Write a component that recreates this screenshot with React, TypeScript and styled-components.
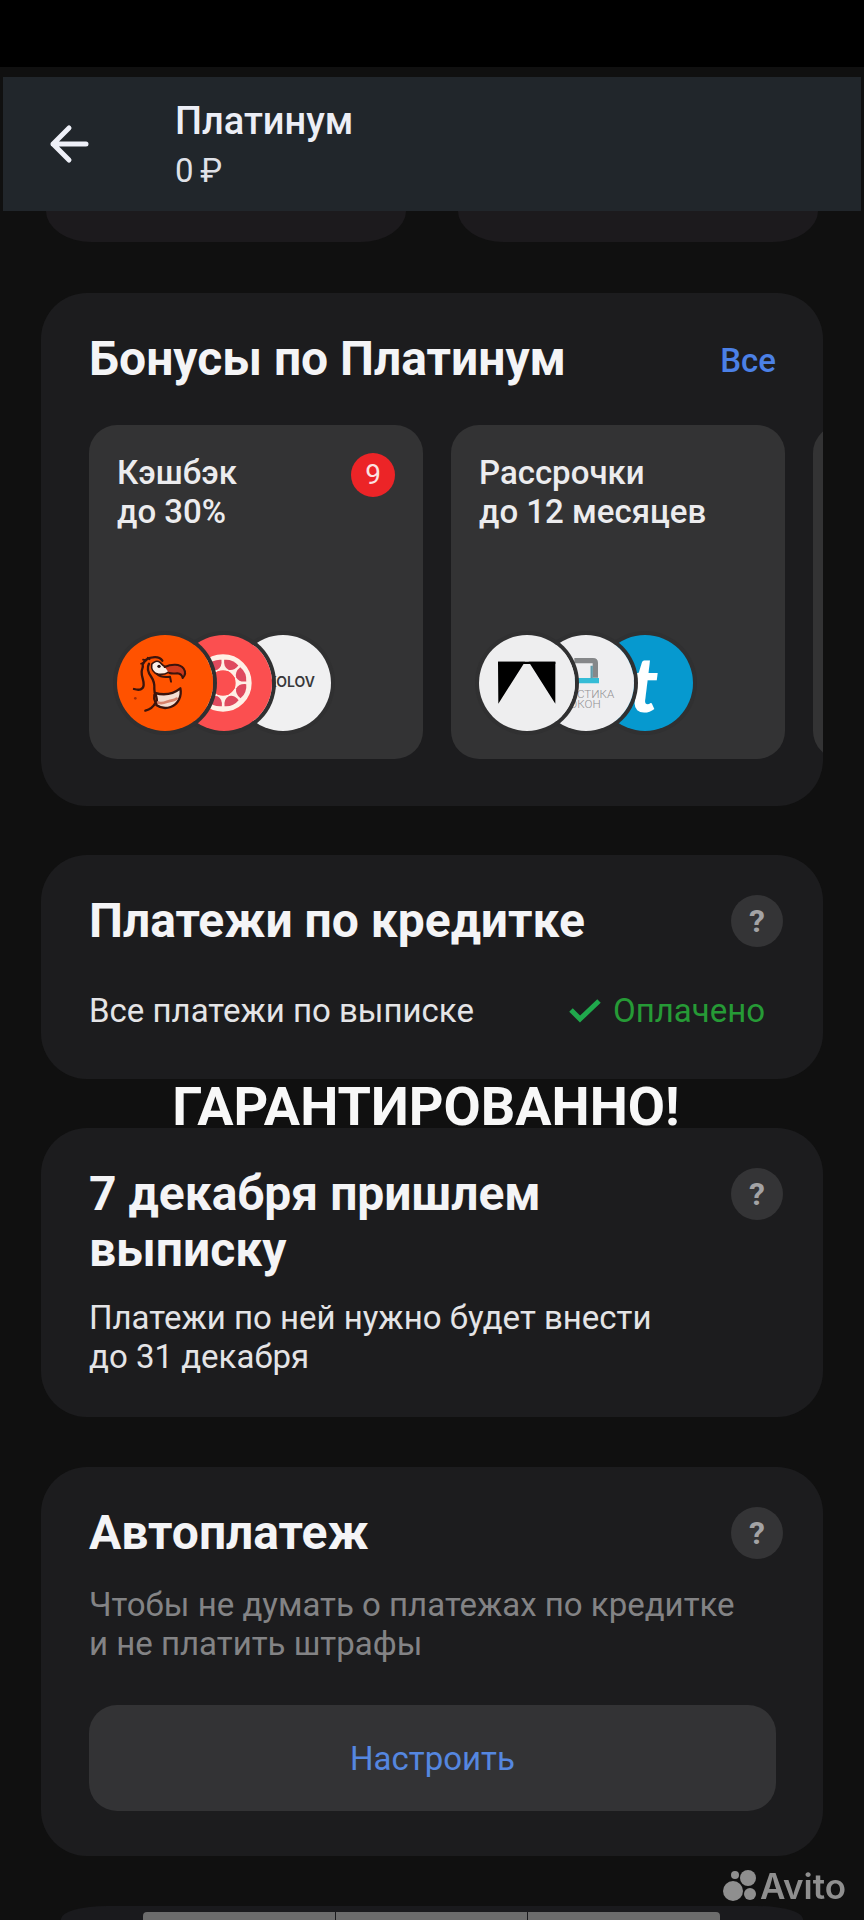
import React from "react";
import styled, { createGlobalStyle } from "styled-components";

const GlobalStyle = createGlobalStyle`
  * { box-sizing: border-box; }
  body {
    margin: 0;
    background: #101010;
    color: #f4f4f6;
    font-family: Roboto, "Liberation Sans", sans-serif;
  }
  h1, h2, p { margin: 0; }
  button { border: 0; padding: 0; font: inherit; cursor: pointer; }
`;

const Page = styled.div`
  display: flex;
  flex-direction: column;
  min-height: 100vh;
  overflow: hidden;
`;

const StatusBar = styled.div`
  height: 67px;
  background: #000;
`;

const Header = styled.header`
  display: flex;
  align-items: center;
  height: 134px;
  margin: 10px 3px 0;
  padding: 0 44px;
  gap: 82px;
  background: #21262b;
`;

const BackButton = styled.button`
  display: flex;
  background: none;
  color: #eef0f8;
`;

const HeaderText = styled.div`
  padding-top: 6px;
`;

const HeaderTitle = styled.h1`
  font-size: 38px;
  line-height: 48px;
  font-weight: 500;
  color: #eceef6;
`;

const Balance = styled.p`
  font-size: 33px;
  line-height: 52px;
  color: #dfe1e8;
`;

const StubRow = styled.div`
  display: flex;
  gap: 52px;
  padding: 0 46px;
  margin-bottom: 51px;
`;

const Stub = styled.div`
  flex: 1;
  height: 31px;
  border-radius: 0 0 46px 46px / 0 0 31px 31px;
  background: #1c1a1d;
`;

const Content = styled.main`
  display: flex;
  flex-direction: column;
  flex: 1;
  padding: 0 41px;
`;

const Card = styled.section<{ $bottom: number; $last?: boolean }>`
  padding: 38px 0 ${(p) => p.$bottom}px 48px;
  margin-bottom: ${(p) => (p.$last ? 50 : 49)}px;
  border-radius: 46px;
  background: #1c1c1e;
  overflow: hidden;
`;

const CardHead = styled.div<{ $right: number }>`
  display: flex;
  justify-content: space-between;
  align-items: flex-start;
  padding-right: ${(p) => p.$right}px;
`;

const CardTitle = styled.h2`
  font-size: 48px;
  line-height: 56px;
  font-weight: 700;
`;

const AllLink = styled.a`
  margin-top: 6px;
  font-size: 33px;
  line-height: 48px;
  font-weight: 500;
  color: #4b80e6;
  text-decoration: none;
`;

const HelpButton = styled.button`
  width: 52px;
  height: 52px;
  margin-top: 2px;
  border-radius: 50%;
  background: #343436;
  color: #a3a3a5;
  font-size: 32px;
  line-height: 52px;
  font-weight: 700;
`;

const Scroller = styled.div`
  display: flex;
  gap: 28px;
  margin-top: 38px;
  overflow: hidden;
`;

const Tile = styled.article`
  display: flex;
  flex-direction: column;
  justify-content: space-between;
  flex: 0 0 334px;
  height: 334px;
  padding: 28px;
  border-radius: 28px;
  background: #333334;
`;

const TileTop = styled.div`
  display: flex;
  justify-content: space-between;
  align-items: flex-start;
`;

const TileText = styled.p`
  font-size: 33px;
  line-height: 39px;
  font-weight: 500;
  color: #ececee;
`;

const Count = styled.span`
  width: 44px;
  height: 44px;
  border-radius: 50%;
  background: #ec2427;
  color: #fbe3e3;
  font-size: 28px;
  line-height: 44px;
  text-align: center;
`;

const Logos = styled.div`
  display: flex;
`;

const Logo = styled.svg<{ $level: number }>`
  position: relative;
  z-index: ${(p) => p.$level};
  display: block;
  width: 96px;
  height: 96px;
  margin-right: -37px;
  border-radius: 50%;
  box-shadow: 0 0 0 4px #303031;
`;

const Row = styled.div`
  display: flex;
  justify-content: space-between;
  margin-top: 42px;
  padding-right: 58px;
`;

const Text = styled.p<{ $muted?: boolean }>`
  font-size: 33px;
  line-height: 39px;
  color: ${(p) => (p.$muted ? "#838385" : "#e4e4e6")};
`;

const Spaced = styled.div<{ $top: number }>`
  margin-top: ${(p) => p.$top}px;
`;

const Paid = styled.span`
  display: flex;
  align-items: center;
  gap: 12px;
  font-size: 33px;
  line-height: 39px;
  color: #269a36;
`;

const Banner = styled.p`
  margin: -49px 12px -7px 0;
  font-size: 54px;
  line-height: 56px;
  font-weight: 700;
  text-align: center;
  color: #f8f8f8;
`;

const SetupButton = styled.button`
  display: block;
  width: calc(100% - 47px);
  height: 106px;
  margin-top: 42px;
  border-radius: 28px;
  background: #333335;
  color: #5587e0;
  font-size: 33px;
  line-height: 39px;
`;

const NextCard = styled.div`
  flex: 1;
  min-height: 13px;
  margin: 0 20px;
  border-radius: 46px 46px 0 0 / 13px 13px 0 0;
  background: #1a1a1d;
`;

const NavStrip = styled.div`
  position: fixed;
  left: 143px;
  right: 144px;
  bottom: 0;
  display: flex;
  gap: 1px;
  height: 8px;
  border-radius: 4px 4px 0 0;
  overflow: hidden;
`;

const NavPart = styled.span`
  flex: 1;
  background: #6c6c6c;
`;

const Watermark = styled.div`
  position: fixed;
  right: 18px;
  bottom: 14px;
  display: flex;
  align-items: center;
  gap: 2px;
  color: #8f8f8f;
  font-family: Inter, sans-serif;
  font-size: 35px;
  line-height: 40px;
  font-weight: 600;
`;

const DodoLogo = () => (
  <Logo $level={3} viewBox="86 104 288 288" aria-hidden="true">
    <rect x="80" y="100" width="300" height="300" fill="#ff5200" />
    <g fill="none" stroke="#3c140c" strokeWidth="7" strokeLinecap="round" strokeLinejoin="round">
      <path d="M137 266c16 5 28 2 29-12 1-16-7-24-6-40 1-10 5-13 3-21 5-13 16-21 30-22 14-2 24 2 29 10" />
      <path d="M182 190c-8 15-2 28 7 40 7 10 10 22 9 36 0 9 1 14 4 18" />
      <path d="M158 190l10-4M164 178l10 2M178 172l6 5" strokeWidth="5" />
      <path d="M190 192c6-9 17-12 25-6 6 5 7 10 14 12 12 1 14 10 11 18-9 6-21 7-31 6-14-4-21-16-19-30z" fill="#fbeee6" strokeWidth="5" />
      <path d="M229 200c19-9 46-11 57 5 6 9 5 20-3 28-2-9-6-13-16-14-8 0-14 2-24-1" fill="#cf3a1c" strokeWidth="6" />
      <path d="M206 221c11 10 26 10 39 8l3 15" strokeWidth="6" />
      <path d="M200 278c26 7 55 3 76-14 5 23-6 48-29 56-15 5-32 2-43-6 4-13 1-25-4-36z" fill="#f5ddd2" strokeWidth="7" />
      <path d="M209 306c14 8 27-4 43-6 7-1 10-3 13-5" stroke="#d8826b" strokeWidth="8" />
      <path d="M201 308c-6 12-14 19-30 23M198 284c-2 9 0 17 4 24" />
    </g>
    <circle cx="212" cy="198" r="5" fill="#281210" />
    <circle cx="141" cy="294" r="4" fill="#a52d06" />
  </Logo>
);

const RingLogo = () => (
  <Logo $level={2} viewBox="261 104 288 288" aria-hidden="true">
    <rect x="255" y="98" width="300" height="300" fill="#fb4f50" />
    <circle cx="402" cy="248" r="62" fill="none" stroke="#fff0e6" strokeWidth="48" />
    {Array.from({ length: 8 }, (_, i) => (
      <path
        key={i}
        d="M379 182Q402 170 425 182Q419 203 402 205Q385 203 379 182Z"
        fill="#df4a5e"
        transform={`rotate(${i * 45 + 22} 402 248)`}
      />
    ))}
    <path d="M387 212h30l21 21v30l-21 21h-30l-21-21v-30z" fill="#fb4f50" />
  </Logo>
);

const SokolovLogo = () => (
  <Logo $level={1} viewBox="438 104 288 288" aria-hidden="true">
    <rect x="430" y="98" width="304" height="300" fill="#f0f0f1" />
    <text x="678" y="260" textAnchor="end" fontFamily="Inter, sans-serif" fontWeight="600" fontSize="42" fill="#38383a">
      SOKOLOV
    </text>
  </Logo>
);

const PeakLogo = () => (
  <Logo $level={3} viewBox="89 104 288 288" aria-hidden="true">
    <rect x="80" y="98" width="304" height="300" fill="#eeeeef" />
    <path d="M146 184h81l-80 126zM238 184h80v126z" fill="#000" />
    <path d="M146 184h172v7h-172z" fill="#000" />
  </Logo>
);

const WindowLogo = () => (
  <Logo $level={2} viewBox="267 104 288 288" aria-hidden="true">
    <rect x="260" y="98" width="304" height="300" fill="#eeeef0" />
    <path d="M376 181h56q7 0 7 7v44" fill="none" stroke="#858789" strokeWidth="16" />
    <path d="M376 241h74" stroke="#35bcd6" strokeWidth="16" />
    <path d="M428 196v38" stroke="#5f9aa9" strokeWidth="7" />
    <g fontFamily="Roboto, sans-serif" fontSize="35" fontWeight="300" fill="#919193" textAnchor="end">
      <text x="496" y="292">ПЛАСТИКА</text>
      <text x="455" y="323">ОКОН</text>
    </g>
  </Logo>
);

const TLogo = () => (
  <Logo $level={1} viewBox="446 104 288 288" aria-hidden="true">
    <rect x="440" y="98" width="304" height="300" fill="#0699cf" />
    <text x="545" y="334" fontFamily="Lato, sans-serif" fontWeight="900" fontStyle="italic" fontSize="228" fill="#fff">
      t
    </text>
  </Logo>
);

export default function App() {
  return (
    <>
      <GlobalStyle />
      <Page>
        <StatusBar />
        <Header>
          <BackButton aria-label="Назад">
            <svg width="46" height="46" viewBox="0 0 46 46" fill="none" stroke="currentColor" strokeWidth="5" strokeLinecap="round" strokeLinejoin="round">
              <path d="M22 7L6 23l16 16M6 23h33" />
            </svg>
          </BackButton>
          <HeaderText>
            <HeaderTitle>Платинум</HeaderTitle>
            <Balance>0&#8201;₽</Balance>
          </HeaderText>
        </Header>
        <StubRow>
          <Stub />
          <Stub />
        </StubRow>
        <Content>
          <Card $bottom={47}>
            <CardHead $right={47}>
              <CardTitle>Бонусы по Платинум</CardTitle>
              <AllLink href="#bonuses">Все</AllLink>
            </CardHead>
            <Scroller>
              <Tile>
                <TileTop>
                  <TileText>
                    Кэшбэк
                    <br />
                    до 30%
                  </TileText>
                  <Count>9</Count>
                </TileTop>
                <Logos>
                  <DodoLogo />
                  <RingLogo />
                  <SokolovLogo />
                </Logos>
              </Tile>
              <Tile>
                <TileTop>
                  <TileText>
                    Рассрочки
                    <br />
                    до 12 месяцев
                  </TileText>
                </TileTop>
                <Logos>
                  <PeakLogo />
                  <WindowLogo />
                  <TLogo />
                </Logos>
              </Tile>
              <Tile />
            </Scroller>
          </Card>

          <Card $bottom={49}>
            <CardHead $right={40}>
              <CardTitle>Платежи по кредитке</CardTitle>
              <HelpButton aria-label="Справка о платежах">?</HelpButton>
            </CardHead>
            <Row>
              <Text>Все платежи по выписке</Text>
              <Paid>
                <svg width="32" height="26" viewBox="0 0 32 26" fill="none" stroke="#20a84c" strokeWidth="5" aria-hidden="true">
                  <path d="M2 12l9 9L30 3" />
                </svg>
                Оплачено
              </Paid>
            </Row>
          </Card>

          <Banner>ГАРАНТИРОВАННО!</Banner>

          <Card $bottom={41} $last>
            <CardHead $right={40}>
              <CardTitle>
                7 декабря пришлем
                <br />
                выписку
              </CardTitle>
              <HelpButton aria-label="Справка о выписке">?</HelpButton>
            </CardHead>
            <Spaced $top={20}>
              <Text>
                Платежи по ней нужно будет внести
                <br />
                до 31 декабря
              </Text>
            </Spaced>
          </Card>

          <Card $bottom={45} $last>
            <CardHead $right={40}>
              <CardTitle>Автоплатеж</CardTitle>
              <HelpButton aria-label="Справка об автоплатеже">?</HelpButton>
            </CardHead>
            <Spaced $top={24}>
              <Text $muted>
                Чтобы не думать о платежах по кредитке
                <br />и не платить штрафы
              </Text>
            </Spaced>
            <SetupButton>Настроить</SetupButton>
          </Card>

          <NextCard />
        </Content>
        <NavStrip>
          <NavPart />
          <NavPart />
          <NavPart />
        </NavStrip>
        <Watermark>
          <svg width="36" height="32" viewBox="0 0 36 32" fill="currentColor" aria-hidden="true">
            <circle cx="11" cy="21" r="10" />
            <circle cx="26" cy="8" r="8" />
            <circle cx="28" cy="24" r="6" />
            <circle cx="13" cy="5" r="4" />
          </svg>
          Avito
        </Watermark>
      </Page>
    </>
  );
}
